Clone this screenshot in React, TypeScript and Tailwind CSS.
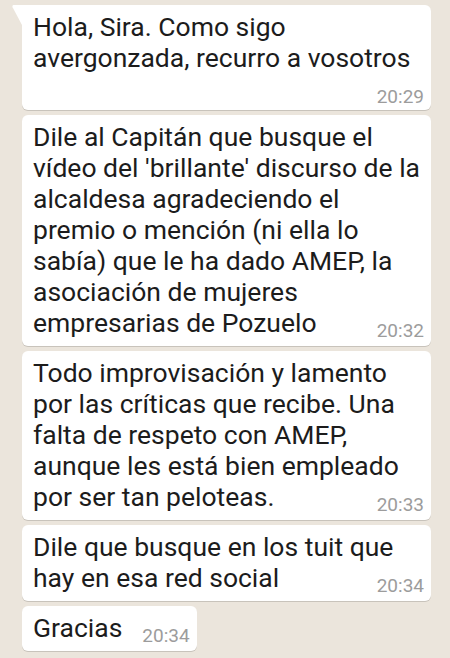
import React from 'react';

interface Message {
  id: number;
  text: string;
  time: string;
}

const messages: Message[] = [
  { id: 1, text: 'Hola, Sira. Como sigo avergonzada, recurro a vosotros', time: '20:29' },
  {
    id: 2,
    text: "Dile al Capitán que busque el vídeo del 'brillante' discurso de la alcaldesa agradeciendo el premio o mención (ni ella lo sabía) que le ha dado AMEP, la asociación de mujeres empresarias de Pozuelo",
    time: '20:32',
  },
  {
    id: 3,
    text: 'Todo improvisación y lamento por las críticas que recibe. Una falta de respeto con AMEP, aunque les está bien empleado por ser tan peloteas.',
    time: '20:33',
  },
  { id: 4, text: 'Dile que busque en los tuit que hay en esa red social', time: '20:34' },
  { id: 5, text: 'Gracias', time: '20:34' },
];

export default function App() {
  return (
    <div
      className="min-h-[658px] w-[450px] bg-[#ebe5dc] pt-[5px] pb-2"
      style={{ fontFamily: 'Roboto, "Noto Sans", sans-serif' }}
    >
      {messages.map((msg, i) => (
        <div
          key={msg.id}
          className={`relative ml-[22px] w-fit max-w-[409px] rounded-[6px] bg-white pt-[6px] pb-2 pl-[11px] pr-[7px] shadow-[0_1px_0.5px_rgba(0,0,0,0.15)] ${
            i === 0 ? 'rounded-tl-none' : 'mt-[5px]'
          }`}
        >
          {i === 0 && (
            <svg className="absolute top-0 left-[-10px] h-[20px] w-[10px]" viewBox="0 0 10 20">
              <path d="M1.5 0H10V20L0.6 2.2C0.1 1.2 0.6 0 1.5 0Z" fill="#ffffff" />
            </svg>
          )}
          <p className="flow-root text-[26.5px] leading-[31px] text-[#1c1c1c]">
            {msg.text}
            <span className="relative top-[8.5px] float-right ml-[20px] text-[19px] leading-[29px] text-[#9c9c9c]">
              {msg.time}
            </span>
          </p>
        </div>
      ))}
    </div>
  );
}
